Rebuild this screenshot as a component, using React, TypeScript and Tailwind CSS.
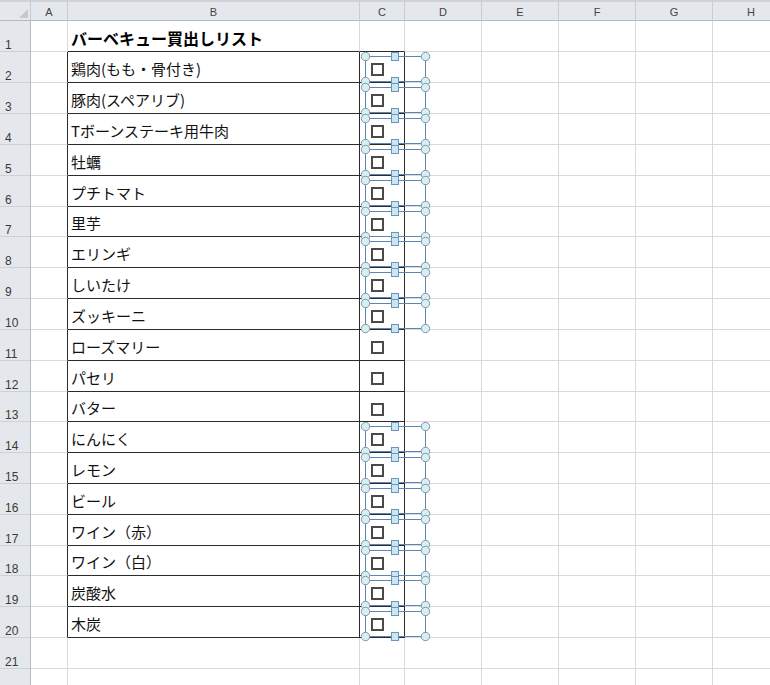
import React from "react";

const COLS = [
  { name: "A", w: "w-[37px]" },
  { name: "B", w: "w-[292px]" },
  { name: "C", w: "w-[45px]" },
  { name: "D", w: "w-[77px]" },
  { name: "E", w: "w-[77px]" },
  { name: "F", w: "w-[77px]" },
  { name: "G", w: "w-[77px]" },
  { name: "H", w: "w-[77px]" },
];

const HEIGHTS = [31, 31, 31, 31, 31, 31, 30, 31, 31, 31, 31, 31, 30, 31, 31, 31, 31, 30, 31, 31, 31, 31];

const ITEMS = [
  "鶏肉(もも・骨付き)",
  "豚肉(スペアリブ)",
  "Tボーンステーキ用牛肉",
  "牡蠣",
  "プチトマト",
  "里芋",
  "エリンギ",
  "しいたけ",
  "ズッキーニ",
  "ローズマリー",
  "パセリ",
  "バター",
  "にんにく",
  "レモン",
  "ビール",
  "ワイン（赤）",
  "ワイン（白）",
  "炭酸水",
  "木炭",
];

const SELECTED = [2, 3, 4, 5, 6, 7, 8, 9, 10, 14, 15, 16, 17, 18, 19, 20];

const jp = "font-['Noto_Sans_CJK_JP','Noto_Sans_CJK_SC',sans-serif]";

function rowTop(r: number) {
  let t = 21;
  for (let i = 1; i < r; i++) t += HEIGHTS[i - 1];
  return t;
}

function Cell({ r, c }: { r: number; c: number }) {
  const col = COLS[c];
  const inTable = r >= 2 && r <= 20;
  let cls = `${col.w} shrink-0 border-r border-b border-[#d9d9d9] flex items-end`;
  if (c === 0 && inTable) cls += " !border-r-[#2b2b2b]";
  if ((c === 1 || c === 2) && inTable) cls += " !border-r-[#2b2b2b] !border-b-[#2b2b2b]";
  if ((c === 1 || c === 2) && r === 1) cls += " !border-b-[#2b2b2b]";

  if (c === 1 && r === 1) {
    return (
      <div className={cls}>
        <span className={`${jp} pl-[3px] pb-[3px] text-[16px] leading-[20px] font-bold text-black whitespace-nowrap`}>
          バーベキュー買出しリスト
        </span>
      </div>
    );
  }
  if (c === 1 && inTable) {
    return (
      <div className={cls}>
        <span className={`${jp} pl-[3px] pb-[3px] text-[15px] leading-[20px] text-[#111] whitespace-nowrap`}>
          {ITEMS[r - 2]}
        </span>
      </div>
    );
  }
  if (c === 2 && inTable) {
    return (
      <div className={`${cls} !items-start`}>
        <div className="ml-[11px] mt-[11px] w-[13px] h-[13px] border-2 border-[#4a4a4a] bg-white" />
      </div>
    );
  }
  return <div className={cls} />;
}

function Row({ r }: { r: number }) {
  const h = HEIGHTS[r - 1] === 30 ? "h-[30px]" : "h-[31px]";
  return (
    <div className={`flex ${h}`}>
      <div className="w-[31px] shrink-0 bg-[#e4e7eb] border-r border-r-[#b4bac1] border-b border-b-[#cdd1d6] flex items-end pl-[5px]">
        {r <= 21 && (
          <span className="font-['Liberation_Sans',sans-serif] text-[12px] leading-[12px] text-[#3a3a3a]">{r}</span>
        )}
      </div>
      {COLS.map((_, c) => (
        <Cell key={c} r={r} c={c} />
      ))}
    </div>
  );
}

function Overlay() {
  const parts: React.ReactNode[] = [];
  SELECTED.forEach((r) => {
    const top = rowTop(r) + 4;
    const bottom = top + 25;
    const L = 365;
    const R = 425;
    const M = 395;
    parts.push(
      <g key={r}>
        <rect x={L + 0.5} y={top + 0.5} width={R - L} height={bottom - top} fill="none" stroke="#5b87b8" strokeWidth={1} />
        {[top, bottom].map((y, i) => (
          <rect key={"s" + i} x={M - 3.5} y={y - 3.5} width={7} height={8} fill="#c9e7f1" stroke="#6d93b9" strokeWidth={1} />
        ))}
        {[
          [L, top],
          [R, top],
          [L, bottom],
          [R, bottom],
        ].map(([x, y], i) => (
          <circle key={"c" + i} cx={x + 0.5} cy={y + 0.5} r={4.2} fill="#d6eff2" stroke="#8797a5" strokeWidth={1} />
        ))}
      </g>
    );
  });
  return (
    <svg className="absolute left-0 top-0 pointer-events-none" width={770} height={685} viewBox="0 0 770 685">
      {parts}
    </svg>
  );
}

export default function App() {
  return (
    <div className="relative w-[770px] h-[685px] overflow-hidden bg-white">
      <div className="flex h-[21px]">
        <div className="relative w-[31px] shrink-0 bg-[#e4e7eb] border-t-2 border-t-[#cfd3d8] border-r border-r-[#c3c8ce] border-b border-b-[#b3b9c0]">
          <svg className="absolute left-0 top-0" width={31} height={19} viewBox="0 0 31 19" style={{ top: -2 }}>
            <polygon points="28,9 28,18 19,18" fill="#c3c8ce" />
          </svg>
        </div>
        {COLS.map((c) => (
          <div
            key={c.name}
            className={`${c.w} shrink-0 bg-[#e4e7eb] border-t-2 border-t-[#cfd3d8] border-r border-r-[#c8cdd3] border-b border-b-[#b3b9c0] flex items-end justify-center pb-[2px]`}
          >
            <span className="font-['Liberation_Sans',sans-serif] text-[11px] leading-[12px] text-[#444]">{c.name}</span>
          </div>
        ))}
      </div>
      {HEIGHTS.map((_, i) => (
        <Row key={i} r={i + 1} />
      ))}
      <Overlay />
    </div>
  );
}
